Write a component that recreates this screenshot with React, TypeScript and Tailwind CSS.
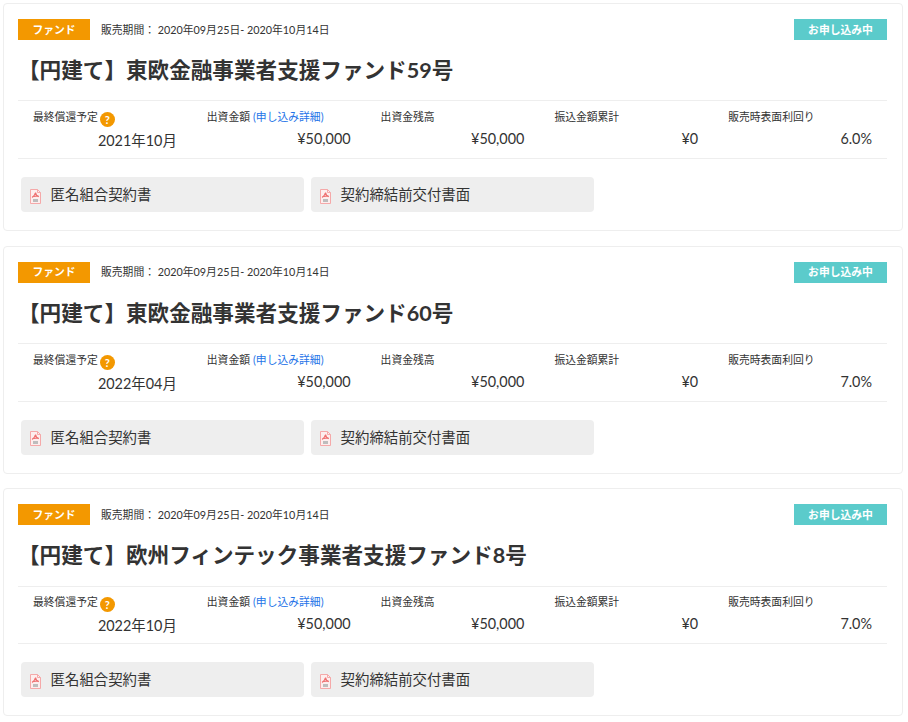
const FONT = "font-['Lato','Noto_Sans_CJK_JP',sans-serif]";

interface Fund {
  title: string;
  redemption: string;
  yieldRate: string;
}

const FUNDS: Fund[] = [
  { title: '【円建て】東欧金融事業者支援ファンド59号', redemption: '2021年10月', yieldRate: '6.0%' },
  { title: '【円建て】東欧金融事業者支援ファンド60号', redemption: '2022年04月', yieldRate: '7.0%' },
  { title: '【円建て】欧州フィンテック事業者支援ファンド8号', redemption: '2022年10月', yieldRate: '7.0%' },
];

const PdfIcon = () => (
  <svg width="11" height="15" viewBox="0 0 11 15" fill="none" className="mt-[3px] shrink-0">
    <path d="M.5.5h7l3 3v11H.5z" fill="#fdeeee" stroke="#f5a9a9" />
    <path d="M7.5.5v3h3" stroke="#f5a9a9" />
    <path d="M5.5 3.5c-.4 2-1.4 3.6-3.4 5M5.5 3.5c.2 2 1.2 3.2 3.4 4.2M2.2 7.8c2.2-.8 4.4-1 6.7-.4" stroke="#ee7272" strokeWidth="1.2" />
    <rect x="3" y="10" width="5" height="3" fill="#bdbdbd" />
  </svg>
);

const DocButton = ({ label }: { label: string }) => (
  <div className="flex h-[35.2px] w-[283px] items-center gap-[9.6px] rounded bg-[#eeeeee] pt-[0.6px] pl-[9px] text-[14.4px] text-[#333333]">
    <PdfIcon />
    <span>{label}</span>
  </div>
);

const Stat = ({ label, value, extra }: { label: string; value: string; extra?: React.ReactNode }) => (
  <div className="px-[15px]">
    <div className="flex items-start pt-px text-[10.8px] leading-[16px] text-[#333333]">
      <span>{label}</span>
      {extra}
    </div>
    <div className="mt-[4px] text-right text-[14.4px] leading-[20px] text-[#333333]">{value}</div>
  </div>
);

const FundCard = ({ fund }: { fund: Fund }) => (
  <div className="mb-[14.6px] h-[228px] w-[900px] rounded border border-[#eeeeee] bg-white pt-[15px] pl-[14px] pr-[15px]">
    <div className="flex h-[21px] items-center">
      <span className="flex h-[21px] w-[72px] items-center justify-center bg-[#f39800] text-[10.8px] font-bold text-white">ファンド</span>
      <span className="ml-[11px] text-[10.8px] text-[#333333]">販売期間： 2020年09月25日- 2020年10月14日</span>
      <span className="ml-auto flex h-[21px] w-[93px] items-center justify-center bg-[#5bcbcb] text-[10.8px] font-bold text-white">お申し込み中</span>
    </div>
    <h2 className="mt-[14px] h-[46.2px] text-[21.6px] leading-[32px] font-bold text-[#333333]">{fund.title}</h2>
    <div className="grid h-[58.6px] grid-cols-5 border-y border-[#eeeeee] pt-[6.7px]">
      <Stat
        label="最終償還予定"
        value={fund.redemption}
        extra={
          <span className="mt-[3px] ml-[2px] flex h-[15px] w-[15px] items-center justify-center rounded-full bg-[#f39800] text-[11px] leading-none font-bold text-white">?</span>
        }
      />
      <Stat label="出資金額" value="¥50,000" extra={<span className="ml-[3px] text-[#1e73e8]">(申し込み詳細)</span>} />
      <Stat label="出資金残高" value="¥50,000" />
      <Stat label="振込金額累計" value="¥0" />
      <Stat label="販売時表面利回り" value={fund.yieldRate} />
    </div>
    <div className="mt-[18px] ml-[3px] flex gap-[7px]">
      <DocButton label="匿名組合契約書" />
      <DocButton label="契約締結前交付書面" />
    </div>
  </div>
);

export default function App() {
  return (
    <div className={`${FONT} min-h-[722px] overflow-hidden bg-white pt-[3.2px] pl-[3px]`}>
      {FUNDS.map((fund) => (
        <FundCard key={fund.title} fund={fund} />
      ))}
    </div>
  );
}
